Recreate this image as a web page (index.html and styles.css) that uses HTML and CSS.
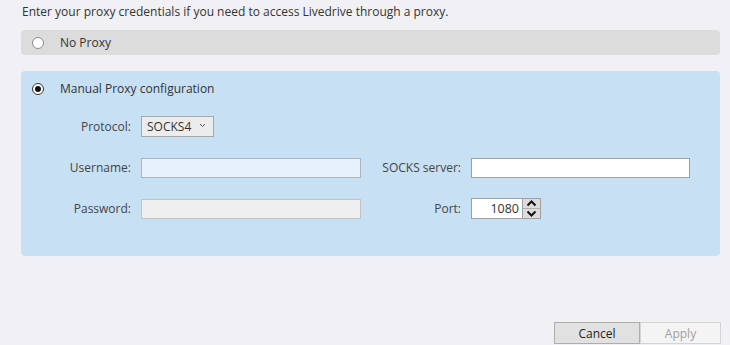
FILE: index.html
```html
<!DOCTYPE html>
<html lang="en">
<head>
    <meta charset="utf-8" />
    <title>Proxy settings</title>
    <link rel="stylesheet" href="styles.css">
</head>
<body>
    <div id="page">
        <p class="intro">Enter your proxy credentials if you need to access Livedrive through a proxy.</p>

        <div class="panel off">
            <span class="radio"></span>
            <span class="radio-label">No Proxy</span>
        </div>

        <div class="panel on">
            <div class="radio-row">
                <span class="radio checked"></span>
                <span class="radio-label">Manual Proxy configuration</span>
            </div>
            <div class="form">
                <label class="lbl">Protocol:</label>
                <div class="select">
                    <span>SOCKS4</span>
                    <svg width="7" height="5" viewBox="0 0 7 5"><path d="M1 1 L3.5 3.5 L6 1" fill="none" stroke="#555" stroke-width="1"/></svg>
                </div>
                <span></span><span></span>

                <label class="lbl">Username:</label>
                <div class="field user"></div>
                <label class="lbl">SOCKS server:</label>
                <div class="field server"></div>

                <label class="lbl">Password:</label>
                <div class="field pass"></div>
                <label class="lbl">Port:</label>
                <div class="port">
                    <span class="port-value">1080</span>
                    <div class="spin">
                        <div class="spin-btn"><svg width="11" height="7" viewBox="0 0 11 7"><path d="M1.5 5.5 L5.5 1.5 L9.5 5.5" fill="none" stroke="#111" stroke-width="2"/></svg></div>
                        <div class="spin-btn"><svg width="11" height="7" viewBox="0 0 11 7"><path d="M1.5 1.5 L5.5 5.5 L9.5 1.5" fill="none" stroke="#111" stroke-width="2"/></svg></div>
                    </div>
                </div>
            </div>
        </div>

        <div class="buttons">
            <button class="btn cancel">Cancel</button>
            <button class="btn apply">Apply</button>
        </div>
    </div>
</body>
</html>
```

FILE: styles.css
```css
html, body {
    margin: 0;
    height: 100%;
    background-color: #f0f0f5;
}
#page {
    font-family: "Open Sans", "Noto Sans", sans-serif;
    font-size: 12px;
    color: #333;
    padding: 4px 10px 0 21px;
}
.intro {
    margin: 0 0 10px 1px;
    line-height: 16px;
}
.panel {
    border-radius: 4px;
}
.off {
    background-color: #dcdcdc;
    height: 25px;
    display: flex;
    align-items: center;
    padding-left: 11px;
    margin-bottom: 16px;
}
.on {
    background-color: #c8e0f4;
    height: 185px;
    box-sizing: border-box;
    padding: 10px 0 0 11px;
}
.radio-row {
    display: flex;
    align-items: center;
    height: 15px;
}
.radio {
    width: 12px;
    height: 12px;
    box-sizing: border-box;
    border: 1px solid #8c8c8c;
    border-radius: 50%;
    background-color: #fff;
    display: inline-block;
    position: relative;
}
.checked {
    border-color: #333;
}
.checked::after {
    content: "";
    position: absolute;
    left: 2px;
    top: 2px;
    width: 6px;
    height: 6px;
    border-radius: 50%;
    background-color: #111;
}
.radio-label {
    margin-left: 16px;
    line-height: 16px;
}
.form {
    display: grid;
    grid-template-columns: 99px 220px 90px 219px;
    grid-auto-rows: 21px;
    row-gap: 20px;
    column-gap: 10px;
    margin-top: 20px;
    align-items: center;
}
.lbl {
    text-align: right;
    color: #444;
}
.select {
    width: 73px;
    height: 21px;
    box-sizing: border-box;
    border: 1px solid #a8a8a8;
    background-color: #ececec;
    display: flex;
    align-items: center;
    justify-content: space-between;
    padding: 0 7px 0 5px;
    color: #333;
}
.select svg {
    margin-top: -3px;
}
.field {
    height: 20px;
    box-sizing: border-box;
    border: 1px solid #a8b4c0;
}
.user {
    background-color: #e6f1fc;
}
.pass {
    background-color: #efefef;
    border-color: #c0c4c8;
}
.server {
    background-color: #fff;
    border-color: #a0a0a0;
}
.port {
    width: 70px;
    height: 21px;
    box-sizing: border-box;
    border: 1px solid #a0a0a0;
    background-color: #fff;
    display: flex;
}
.port-value {
    flex: 1;
    text-align: right;
    padding-right: 3px;
    line-height: 19px;
    font-size: 12.5px;
    color: #333;
}
.spin {
    width: 17px;
    display: flex;
    flex-direction: column;
    border-left: 1px solid #a0a0a0;
}
.spin-btn {
    flex: 1;
    background-color: #dcdcdc;
    display: flex;
    align-items: center;
    justify-content: center;
}
.spin-btn + .spin-btn {
    border-top: 1px solid #b0b0b0;
}
.buttons {
    display: flex;
    justify-content: flex-end;
    margin-top: 66px;
    margin-right: -1px;
}
.btn {
    font-family: "Open Sans", "Noto Sans", sans-serif;
    font-size: 12px;
    height: 22px;
    padding: 0;
    border-radius: 0;
}
.cancel {
    width: 86px;
    background-color: #e1e1e1;
    border: 1px solid #adadad;
    color: #222;
}
.apply {
    width: 81px;
    background-color: #f4f4f4;
    border: 1px solid #d4d4d4;
    color: #a0a0a0;
}
```
